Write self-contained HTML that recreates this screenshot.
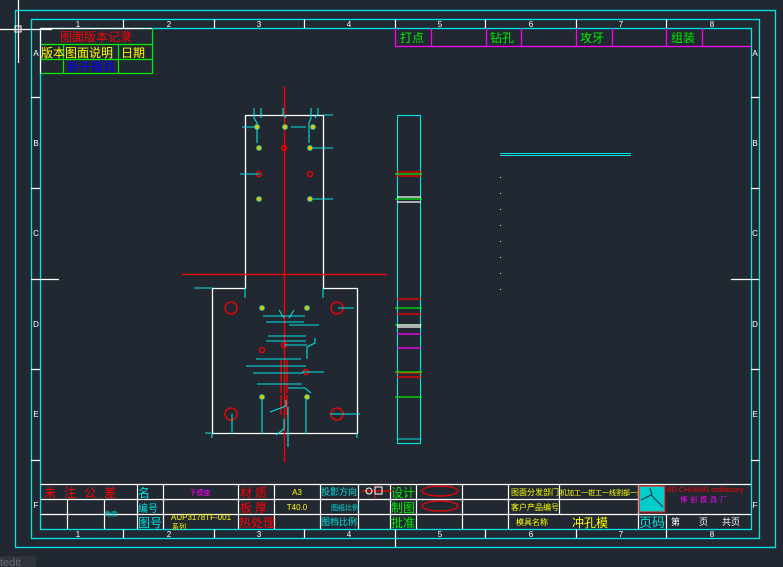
<!DOCTYPE html>
<html><head><meta charset="utf-8"><style>
html,body{margin:0;padding:0;background:#222831;overflow:hidden}
svg{display:block}
text{font-family:"Liberation Sans","Noto Sans CJK SC",sans-serif}
</style></head><body>
<svg width="783" height="567" viewBox="0 0 783 567" xmlns="http://www.w3.org/2000/svg">
<rect width="783" height="567" fill="#222831"/>
<g fill="none" stroke="#00e5e5" stroke-width="1.3">
<rect x="15.5" y="10.5" width="760" height="537"/>
<rect x="31.5" y="19.5" width="728" height="519"/>
<rect x="40.5" y="28.5" width="711" height="501"/>
</g>
<g stroke="#fff" stroke-width="1.2">
<path d="M123.5 19v9M214.5 19v9M304.5 19v9M395.5 19v9M485.5 19v9M576.5 19v9M666.5 19v9"/>
<path d="M123.5 529v9M214.5 529v9M304.5 529v9M395.5 529v9M485.5 529v9M576.5 529v9M666.5 529v9"/>
<path d="M31 97.5h9M31 188.5h9M31 369.5h9M31 460.5h9M751 97.5h9M751 188.5h9M751 369.5h9M751 460.5h9"/>
<path d="M31 279.5h28M731 279.5h28M395.5 538v9"/>
<path d="M18.5 0v63M0 29.5h52"/>
</g>
<rect x="15" y="26" width="6" height="6" fill="none" stroke="#fff"/>
<g fill="#fff" font-size="8" text-anchor="middle">
<text x="78" y="27">1</text><text x="169" y="27">2</text><text x="259" y="27">3</text><text x="349" y="27">4</text><text x="440" y="27">5</text><text x="531" y="27">6</text><text x="621" y="27">7</text><text x="712" y="27">8</text>
<text x="78" y="537">1</text><text x="169" y="537">2</text><text x="259" y="537">3</text><text x="349" y="537">4</text><text x="440" y="537">5</text><text x="531" y="537">6</text><text x="621" y="537">7</text><text x="712" y="537">8</text>
<text x="36" y="56">A</text><text x="36" y="146">B</text><text x="36" y="236">C</text><text x="36" y="327">D</text><text x="36" y="417">E</text><text x="36" y="508">F</text>
<text x="755" y="56">A</text><text x="755" y="146">B</text><text x="755" y="236">C</text><text x="755" y="327">D</text><text x="755" y="417">E</text><text x="755" y="508">F</text>
</g>
<g fill="none" stroke="#00ee00" stroke-width="1.2">
<path d="M40 44.5h112M40 59.5h112M40 73.5h112M152.5 28v46M63.5 44v30M118.5 44v30"/>
</g>
<path d="M40.5 28v46M40 28.5h112" stroke="#fff" fill="none" stroke-width="1.2"/>
<text x="96" y="41" fill="#ff0000" font-size="12" text-anchor="middle">图面版本记录</text>
<text x="41" y="57" fill="#ffff00" font-size="12">版本</text>
<text x="65" y="57" fill="#ffff00" font-size="12">图面说明</text>
<text x="121" y="57" fill="#ffff00" font-size="12">日期</text>
<text x="91" y="71" fill="#0000ff" font-size="12" text-anchor="middle">新开模具</text>
<g fill="none" stroke="#ff00ff" stroke-width="1.2">
<path d="M395 46.5h356M395.5 28v18M431.5 28v18M486.5 28v18M521.5 28v18M576.5 28v18M612.5 28v18M666.5 28v18M702.5 28v18"/>
</g>
<g fill="#00ee00" font-size="12">
<text x="400" y="42">打点</text><text x="490" y="42">钻孔</text><text x="580" y="42">攻牙</text><text x="671" y="42">组装</text>
</g>
<g fill="none" stroke="#fff" stroke-width="1.3">
<path d="M212.5 433.5V288.5h33V115.5h78v173h34v145z"/>
</g>
<g stroke="#ff0000" stroke-width="1.3" fill="none">
<path d="M284.5 86v376M182 274.5h205"/>
<circle cx="231" cy="308" r="6"/><circle cx="337" cy="308" r="6"/>
<circle cx="231" cy="414" r="6"/><circle cx="337" cy="414" r="6"/>
<circle cx="259" cy="174" r="2.5"/><circle cx="310" cy="174" r="2.5"/>
<circle cx="284" cy="148" r="2.5"/><circle cx="262" cy="350" r="2.5"/><circle cx="306" cy="372" r="2.5"/><circle cx="284" cy="345" r="2.5"/>
<path d="M281 360v22M287 360v22M281 383v10M287 383v10M281 395v20M287 395v20"/>
</g>
<g stroke="#00e5e5" stroke-width="1.1" fill="none">
<path d="M254 108v10l3 5v20M261 108v10M283 108v6l3 4M311 108v10l-2 5v20M318 108v6l-3 4M323 115h10"/>
<path d="M242 127h14M291 127h15M313 148h20M240 174h20M313 199h20M194 288h19M245 288v10M323 288v10M338 308h16"/>
<path d="M263 316h42M266 322h38M268 336h38M266 341h40M256 359h45M246 366h60M253 373h50M257 384h45M284 345h23M289 325h30M307 359v-12l8-4v-5M288 407v40M270 412l16-6v-6M276 435l8-6v-10M288 388h17l6 5M302 372h22M205 433h6M232 414v20M262 400v34M306 400v34M330 414h30M357 433v5M212 433v5"/>
<path d="M284 318l-5-8M289 318l5-8"/>
<rect x="397.5" y="115.5" width="23" height="328"/>
<path d="M397 439h24M500 153.5h131M500 155.5h131"/>
</g>
<g fill="#e0c000" stroke="#00e5e5" stroke-width="0.6">
<circle cx="257" cy="127" r="2.5"/><circle cx="285" cy="127" r="2.5"/><circle cx="313" cy="127" r="2.5"/>
<circle cx="259" cy="148" r="2.5"/><circle cx="310" cy="148" r="2.5"/>
<circle cx="259" cy="199" r="2.5"/><circle cx="310" cy="199" r="2.5"/>
<circle cx="262" cy="308" r="2.5"/><circle cx="307" cy="308" r="2.5"/>
<circle cx="262" cy="397" r="2.5"/><circle cx="307" cy="397" r="2.5"/>
</g>
<g stroke-width="1.2">
<path d="M396 172h26M396 176h26M396 299h26M396 314h26M396 373h26M396 377h26" stroke="#ff0000"/>
<path d="M395 174h27M395 199h27M395 308h27M395 325h27M395 372h27M395 397h27" stroke="#00ee00"/>
<path d="M397 197h24M397 202h24M397 325h24M397 327h24" stroke="#fff"/>
<path d="M397 334h24M397 348h24" stroke="#ff00ff"/>
</g>
<g fill="#ffff00">
<rect x="500" y="177" width="1" height="1"/><rect x="500" y="193" width="1" height="1"/><rect x="500" y="209" width="1" height="1"/><rect x="500" y="225" width="1" height="1"/><rect x="500" y="241" width="1" height="1"/><rect x="500" y="257" width="1" height="1"/><rect x="500" y="273" width="1" height="1"/><rect x="500" y="289" width="1" height="1"/>
</g>
<g fill="none" stroke="#fff" stroke-width="1.2">
<path d="M40 484.5h711M40 499.5h598M40 514.5h711M67.5 499v30M104.5 499v30M137.5 484v45M163.5 484v45M238.5 484v45M274.5 484v45M320.5 484v45M358.5 484v45M390.5 484v45M416.5 484v45M462.5 484v45M508.5 484v45M559.5 484v30M638.5 484v45M666.5 514v15"/>
</g>
<g font-size="12">
<text x="44" y="497" fill="#ff0000" letter-spacing="8">未注公差</text>
<text x="138" y="497" fill="#00e5e5">名</text>
<text x="138" y="512" fill="#00e5e5" font-size="10">编号</text>
<text x="138" y="527" fill="#00e5e5">图号</text>
<text x="200" y="495" fill="#ff00ff" font-size="7" text-anchor="middle">下模座</text>
<text x="105" y="516" fill="#00e5e5" font-size="6">角度:</text>
<text x="171" y="520" fill="#ffff00" font-size="8">AUP3178TF-001</text>
<text x="172" y="529" fill="#ffff00" font-size="7">系列</text>
<text x="240" y="497" fill="#ff0000" letter-spacing="3">材质</text>
<text x="240" y="512" fill="#ff0000" letter-spacing="3">板厚</text>
<text x="239" y="527" fill="#ff0000">热处理</text>
<text x="297" y="495" fill="#ffff00" font-size="8" text-anchor="middle">A3</text>
<text x="297" y="510" fill="#ffff00" font-size="8" text-anchor="middle">T40.0</text>
<text x="321" y="495" fill="#00e5e5" font-size="9">投影方向</text>
<text x="331" y="510" fill="#00e5e5" font-size="7">图纸比例</text>
<text x="321" y="525" fill="#00e5e5" font-size="9">图档比例</text>
<text x="391" y="497" fill="#00ee00">设计</text>
<text x="391" y="512" fill="#00ee00">制图</text>
<text x="391" y="527" fill="#00ee00">批准</text>
<text x="511" y="495" fill="#ffff00" font-size="8">图面分发部门</text>
<text x="560" y="495" fill="#ffff00" font-size="7">机加工一钳工一线割部一组</text>
<text x="511" y="510" fill="#ffff00" font-size="8">客户产品编号</text>
<text x="516" y="525" fill="#ffff00" font-size="8">模具名称</text>
<text x="572" y="527" fill="#ffff00" font-size="12">冲孔模</text>
<text x="639" y="527" fill="#00e5e5" font-size="13">页码</text>
<text x="671" y="525" fill="#fff" font-size="9">第</text>
<text x="699" y="525" fill="#fff" font-size="9">页</text>
<text x="722" y="525" fill="#fff" font-size="9">共页</text>
<text x="667" y="492" fill="#ff0000" font-size="7">BO CHUANG molfactory</text>
<text x="680" y="502" fill="#ff00ff" font-size="7" letter-spacing="3">博创模具厂</text>
</g>
<g fill="none" stroke="#ff0000" stroke-width="1.2">
<ellipse cx="440" cy="491" rx="18" ry="5"/><ellipse cx="440" cy="506" rx="18" ry="5"/>
<path d="M362 491h30M375 485v13"/>
</g>
<circle cx="369" cy="491" r="3" fill="none" stroke="#fff"/><rect x="375" y="487" width="7" height="7" fill="none" stroke="#fff"/>
<rect x="639" y="486" width="26" height="26" fill="#00cccc" stroke="#ff0000"/>
<path d="M641 500l10-5 12 12M652 495l-2-7" stroke="#222831" fill="none"/>
<rect x="0" y="556" width="36" height="11" fill="#2f343a"/>
<text x="0" y="566" fill="#6a6e73" font-size="11" font-family="Liberation Mono,monospace">tedit</text>
</svg>
</body></html>
